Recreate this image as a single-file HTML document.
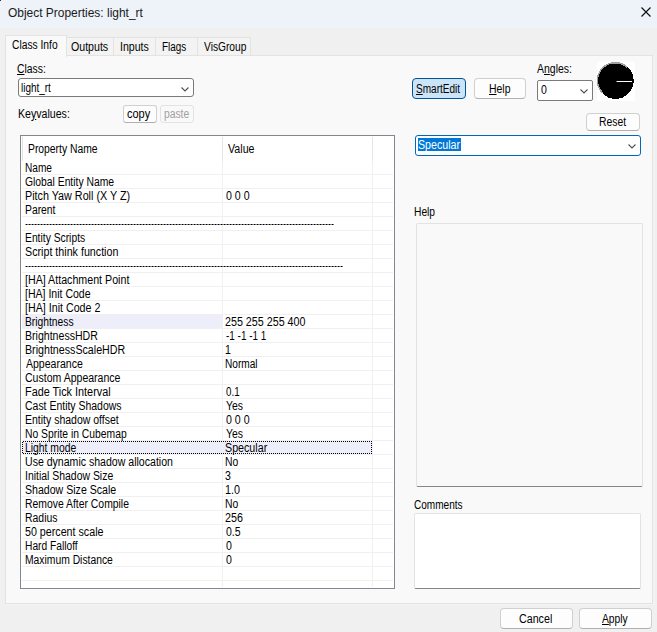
<!DOCTYPE html>
<html><head><meta charset="utf-8">
<style>
*{box-sizing:border-box;margin:0;padding:0}
html,body{width:657px;height:632px;overflow:hidden;background:#f0f0f0}
body{position:relative;font-family:"Liberation Sans",sans-serif;font-size:12px;color:#000}
.a{position:absolute}
.t{position:absolute;white-space:nowrap;line-height:normal;transform-origin:0 0}
u{text-decoration:underline;text-underline-offset:1px}
.btn{position:absolute;background:#fdfdfd;border:1px solid #d0d0d0;border-bottom-color:#b0b0b0;border-radius:4px}
.combo{position:absolute;background:#fff;border:1px solid #7a7a7a;border-radius:3px}
.chev{position:absolute}
</style></head><body>

<div class="a" style="left:0;top:0;width:657px;height:28px;background:#edf3f8"></div>
<div class="a" style="left:0;top:0;width:1px;height:1px;background:#333"></div>
<div class="t" style="left:7.95px;top:6px;transform:scaleX(0.996);color:#1a1a1a">Object Properties: light_rt</div>
<svg class="a" style="left:640px;top:6px" width="13" height="13" viewBox="0 0 13 13"><path d="M1.5 1.5L10.5 10.5M10.5 1.5L1.5 10.5" stroke="#111" stroke-width="1.15"/></svg>
<div class="a" style="left:66px;top:37px;width:48px;height:19px;background:#f3f3f3;border:1px solid #e3e3e3"></div>
<div class="a" style="left:113px;top:37px;width:43px;height:19px;background:#f3f3f3;border:1px solid #e3e3e3"></div>
<div class="a" style="left:155px;top:37px;width:43px;height:19px;background:#f3f3f3;border:1px solid #e3e3e3"></div>
<div class="a" style="left:197px;top:37px;width:54px;height:19px;background:#f3f3f3;border:1px solid #e3e3e3"></div>
<div class="a" style="left:5px;top:55px;width:648px;height:549px;background:#f9f9f9;border:1px solid #e3e3e3"></div>
<div class="a" style="left:653px;top:56px;width:2px;height:549px;background:#f3f3f3"></div>
<div class="a" style="left:6px;top:604px;width:649px;height:1px;background:#f3f3f3"></div>
<div class="a" style="left:5px;top:35px;width:62px;height:22px;background:#f9f9f9;border:1px solid #e3e3e3;border-bottom:none"></div>
<div class="t" style="left:12.33px;top:38px;transform:scaleX(0.855)">Class Info</div>
<div class="t" style="left:70.64px;top:40px;transform:scaleX(0.884)">Outputs</div>
<div class="t" style="left:119.51px;top:40px;transform:scaleX(0.882)">Inputs</div>
<div class="t" style="left:162.20px;top:40px;transform:scaleX(0.823)">Flags</div>
<div class="t" style="left:203.54px;top:40px;transform:scaleX(0.851)">VisGroup</div>
<div class="t" style="left:17.41px;top:62px;transform:scaleX(0.863)"><u>C</u>lass:</div>
<div class="combo" style="left:18px;top:78px;width:176px;height:19px"></div>
<div class="t" style="left:20.73px;top:81px;transform:scaleX(0.828)">light_rt</div>
<svg class="chev" style="left:180px;top:86px" width="10" height="7" viewBox="0 0 10 7"><path d="M1.5 1.5L5 5L8.5 1.5" fill="none" stroke="#505050" stroke-width="1.1"/></svg>
<div class="t" style="left:18.18px;top:107px;transform:scaleX(0.883)">Ke<u>y</u>values:</div>
<div class="btn" style="left:123px;top:105px;width:34px;height:18px;border-radius:3px"></div>
<div class="t" style="left:127.42px;top:107px;transform:scaleX(0.915)">copy</div>
<div class="btn" style="left:160px;top:105px;width:34px;height:18px;border-radius:3px;background:#f9f9f9;border-color:#e3e3e3"></div>
<div class="t" style="left:163.50px;top:107px;transform:scaleX(0.859);color:#a0a0a0">paste</div>
<div class="a" style="left:20px;top:135px;width:375px;height:454px;background:#fff;border:1px solid #828790"></div>
<div class="a" style="left:22px;top:137px;width:1px;height:24px;background:#e5e5e5"></div>
<div class="a" style="left:222px;top:137px;width:1px;height:24px;background:#e5e5e5"></div>
<div class="a" style="left:372px;top:137px;width:1px;height:24px;background:#e5e5e5"></div>
<div class="t" style="left:27.50px;top:142px;transform:scaleX(0.862)">Property Name</div>
<div class="t" style="left:227.61px;top:142px;transform:scaleX(0.889)">Value</div>
<div class="a" style="left:222px;top:161px;width:1px;height:426px;background:#f0f0f0"></div>
<div class="a" style="left:372px;top:161px;width:1px;height:426px;background:#f0f0f0"></div>
<div class="a" style="left:22px;top:315px;width:200px;height:13px;background:#eeeefb"></div>
<div class="a" style="left:22px;top:441px;width:350px;height:13px;background:#eeeefb"></div>
<div class="a" style="left:22px;top:174px;width:371px;height:1px;background:#f0f0f0"></div>
<div class="a" style="left:22px;top:188px;width:371px;height:1px;background:#f0f0f0"></div>
<div class="a" style="left:22px;top:202px;width:371px;height:1px;background:#f0f0f0"></div>
<div class="a" style="left:22px;top:216px;width:371px;height:1px;background:#f0f0f0"></div>
<div class="a" style="left:22px;top:230px;width:371px;height:1px;background:#f0f0f0"></div>
<div class="a" style="left:22px;top:244px;width:371px;height:1px;background:#f0f0f0"></div>
<div class="a" style="left:22px;top:258px;width:371px;height:1px;background:#f0f0f0"></div>
<div class="a" style="left:22px;top:272px;width:371px;height:1px;background:#f0f0f0"></div>
<div class="a" style="left:22px;top:286px;width:371px;height:1px;background:#f0f0f0"></div>
<div class="a" style="left:22px;top:300px;width:371px;height:1px;background:#f0f0f0"></div>
<div class="a" style="left:22px;top:314px;width:371px;height:1px;background:#f0f0f0"></div>
<div class="a" style="left:22px;top:328px;width:371px;height:1px;background:#f0f0f0"></div>
<div class="a" style="left:22px;top:342px;width:371px;height:1px;background:#f0f0f0"></div>
<div class="a" style="left:22px;top:356px;width:371px;height:1px;background:#f0f0f0"></div>
<div class="a" style="left:22px;top:370px;width:371px;height:1px;background:#f0f0f0"></div>
<div class="a" style="left:22px;top:384px;width:371px;height:1px;background:#f0f0f0"></div>
<div class="a" style="left:22px;top:398px;width:371px;height:1px;background:#f0f0f0"></div>
<div class="a" style="left:22px;top:412px;width:371px;height:1px;background:#f0f0f0"></div>
<div class="a" style="left:22px;top:426px;width:371px;height:1px;background:#f0f0f0"></div>
<div class="a" style="left:22px;top:440px;width:371px;height:1px;background:#f0f0f0"></div>
<div class="a" style="left:22px;top:454px;width:371px;height:1px;background:#f0f0f0"></div>
<div class="a" style="left:22px;top:468px;width:371px;height:1px;background:#f0f0f0"></div>
<div class="a" style="left:22px;top:482px;width:371px;height:1px;background:#f0f0f0"></div>
<div class="a" style="left:22px;top:496px;width:371px;height:1px;background:#f0f0f0"></div>
<div class="a" style="left:22px;top:510px;width:371px;height:1px;background:#f0f0f0"></div>
<div class="a" style="left:22px;top:524px;width:371px;height:1px;background:#f0f0f0"></div>
<div class="a" style="left:22px;top:538px;width:371px;height:1px;background:#f0f0f0"></div>
<div class="a" style="left:22px;top:552px;width:371px;height:1px;background:#f0f0f0"></div>
<div class="a" style="left:22px;top:566px;width:371px;height:1px;background:#f0f0f0"></div>
<div class="a" style="left:22px;top:580px;width:371px;height:1px;background:#f0f0f0"></div>
<div class="a" style="left:23px;top:441px;width:349px;height:1px;background:repeating-linear-gradient(90deg,#000 0 1px,transparent 1px 2px)"></div>
<div class="a" style="left:23px;top:453px;width:349px;height:1px;background:repeating-linear-gradient(90deg,#000 0 1px,transparent 1px 2px)"></div>
<div class="a" style="left:22px;top:442px;width:1px;height:11px;background:repeating-linear-gradient(180deg,#000 0 1px,transparent 1px 2px)"></div>
<div class="a" style="left:371px;top:443px;width:1px;height:9px;background:repeating-linear-gradient(180deg,#000 0 1px,transparent 1px 2px)"></div>
<div class="t" style="left:24.76px;top:161px;transform:scaleX(0.842)">Name</div>
<div class="t" style="left:24.74px;top:175px;transform:scaleX(0.861)">Global Entity Name</div>
<div class="t" style="left:24.70px;top:189px;transform:scaleX(0.897)">Pitch Yaw Roll (X Y Z)</div>
<div class="t" style="left:225.60px;top:189px;transform:scaleX(0.885)">0 0 0</div>
<div class="t" style="left:24.74px;top:203px;transform:scaleX(0.862)">Parent</div>
<div class="a" style="left:25px;top:224px;width:309px;height:1px;background:repeating-linear-gradient(90deg,#c8781e 0 1px,#000 1px 2px,#2a80d8 2px 3px)"></div>
<div class="t" style="left:24.74px;top:231px;transform:scaleX(0.859)">Entity Scripts</div>
<div class="t" style="left:24.71px;top:245px;transform:scaleX(0.892)">Script think function</div>
<div class="a" style="left:25px;top:266px;width:318px;height:1px;background:repeating-linear-gradient(90deg,#c8781e 0 1px,#000 1px 2px,#2a80d8 2px 3px)"></div>
<div class="t" style="left:24.71px;top:273px;transform:scaleX(0.889)">[HA] Attachment Point</div>
<div class="t" style="left:24.72px;top:287px;transform:scaleX(0.878)">[HA] Init Code</div>
<div class="t" style="left:24.71px;top:301px;transform:scaleX(0.890)">[HA] Init Code 2</div>
<div class="t" style="left:24.74px;top:315px;transform:scaleX(0.856)">Brightness</div>
<div class="t" style="left:224.71px;top:315px;transform:scaleX(0.893)">255 255 255 400</div>
<div class="t" style="left:24.72px;top:329px;transform:scaleX(0.881)">BrightnessHDR</div>
<div class="t" style="left:225.60px;top:329px;transform:scaleX(0.827)">-1 -1 -1 1</div>
<div class="t" style="left:24.71px;top:343px;transform:scaleX(0.889)">BrightnessScaleHDR</div>
<div class="t" style="left:224.72px;top:343px;transform:scaleX(0.880)">1</div>
<div class="t" style="left:25.60px;top:357px;transform:scaleX(0.877)">Appearance</div>
<div class="t" style="left:224.76px;top:357px;transform:scaleX(0.843)">Normal</div>
<div class="t" style="left:24.72px;top:371px;transform:scaleX(0.878)">Custom Appearance</div>
<div class="t" style="left:24.70px;top:385px;transform:scaleX(0.904)">Fade Tick Interval</div>
<div class="t" style="left:225.60px;top:385px;transform:scaleX(0.812)">0.1</div>
<div class="t" style="left:24.73px;top:399px;transform:scaleX(0.872)">Cast Entity Shadows</div>
<div class="t" style="left:225.60px;top:399px;transform:scaleX(0.868)">Yes</div>
<div class="t" style="left:24.73px;top:413px;transform:scaleX(0.874)">Entity shadow offset</div>
<div class="t" style="left:225.60px;top:413px;transform:scaleX(0.885)">0 0 0</div>
<div class="t" style="left:24.74px;top:427px;transform:scaleX(0.861)">No Sprite in Cubemap</div>
<div class="t" style="left:225.60px;top:427px;transform:scaleX(0.868)">Yes</div>
<div class="t" style="left:24.74px;top:441px;transform:scaleX(0.862)">Light mode</div>
<div class="t" style="left:224.71px;top:441px;transform:scaleX(0.891)">Specular</div>
<div class="t" style="left:24.72px;top:455px;transform:scaleX(0.880)">Use dynamic shadow allocation</div>
<div class="t" style="left:224.74px;top:455px;transform:scaleX(0.864)">No</div>
<div class="t" style="left:24.73px;top:469px;transform:scaleX(0.870)">Initial Shadow Size</div>
<div class="t" style="left:224.72px;top:469px;transform:scaleX(0.880)">3</div>
<div class="t" style="left:24.72px;top:483px;transform:scaleX(0.882)">Shadow Size Scale</div>
<div class="t" style="left:224.70px;top:483px;transform:scaleX(0.900)">1.0</div>
<div class="t" style="left:24.73px;top:497px;transform:scaleX(0.866)">Remove After Compile</div>
<div class="t" style="left:224.74px;top:497px;transform:scaleX(0.864)">No</div>
<div class="t" style="left:24.73px;top:511px;transform:scaleX(0.869)">Radius</div>
<div class="t" style="left:224.71px;top:511px;transform:scaleX(0.895)">256</div>
<div class="t" style="left:24.71px;top:525px;transform:scaleX(0.891)">50 percent scale</div>
<div class="t" style="left:225.60px;top:525px;transform:scaleX(0.875)">0.5</div>
<div class="t" style="left:24.75px;top:539px;transform:scaleX(0.852)">Hard Falloff</div>
<div class="t" style="left:225.60px;top:539px;transform:scaleX(0.880)">0</div>
<div class="t" style="left:24.74px;top:553px;transform:scaleX(0.861)">Maximum Distance</div>
<div class="t" style="left:225.60px;top:553px;transform:scaleX(0.880)">0</div>
<div class="a" style="left:412px;top:78px;width:54px;height:21px;background:#cce4f7;border:1px solid #005499;border-radius:4px"></div>
<div class="t" style="left:415.77px;top:82px;transform:scaleX(0.836)"><u>S</u>martEdit</div>
<div class="btn" style="left:474px;top:78px;width:52px;height:21px"></div>
<div class="t" style="left:488.73px;top:82px;transform:scaleX(0.870)"><u>H</u>elp</div>
<div class="t" style="left:536.55px;top:62px;transform:scaleX(0.874)">A<u>n</u>gles:</div>
<div class="combo" style="left:537px;top:80px;width:56px;height:21px;border-radius:2px"></div>
<div class="t" style="left:540.50px;top:83px;transform:scaleX(0.880)">0</div>
<svg class="chev" style="left:579px;top:88px" width="10" height="7" viewBox="0 0 10 7"><path d="M1.5 1.5L5 5L8.5 1.5" fill="none" stroke="#505050" stroke-width="1.1"/></svg>
<div class="a" style="left:597px;top:62px;width:38px;height:39px;background:#fff"></div>
<svg class="a" style="left:597px;top:62px" width="38" height="39" viewBox="0 0 38 39">
<circle cx="18.5" cy="18.75" r="18.2" fill="#000" shape-rendering="crispEdges"/>
<path d="M5.5 30.85 A17.75 17.75 0 0 1 30.4 5.56" fill="none" stroke="#a0a0a0" stroke-width="1.5" shape-rendering="crispEdges"/>
<path d="M19.5 19.5H35" stroke="#fff" stroke-width="1"/>
</svg>
<div class="btn" style="left:586px;top:113px;width:54px;height:18px"></div>
<div class="t" style="left:598.55px;top:115px;transform:scaleX(0.864)">Reset</div>
<div class="combo" style="left:415px;top:135px;width:226px;height:21px;border-color:#0067c0"></div>
<div class="a" style="left:418px;top:138px;width:43px;height:13px;background:#0078d7"></div>
<div class="t" style="left:417.86px;top:138px;transform:scaleX(0.886);color:#fff">Specular</div>
<svg class="chev" style="left:627px;top:143px" width="10" height="7" viewBox="0 0 10 7"><path d="M1.5 1.5L5 5L8.5 1.5" fill="none" stroke="#505050" stroke-width="1.1"/></svg>
<div class="t" style="left:413.71px;top:205px;transform:scaleX(0.853)">Help</div>
<div class="a" style="left:416px;top:223px;width:227px;height:264px;background:#f9f9f9;border:1px solid #e3e3e3;border-bottom:1px solid #868686;border-radius:2px"></div>
<div class="t" style="left:413.74px;top:498px;transform:scaleX(0.838)">Comments</div>
<div class="a" style="left:414px;top:513px;width:227px;height:76px;background:#fff;border:1px solid #e3e3e3;border-bottom:1px solid #868686;border-radius:2px"></div>
<div class="btn" style="left:500px;top:608px;width:73px;height:21px"></div>
<div class="t" style="left:519.48px;top:612px;transform:scaleX(0.891)">Cancel</div>
<div class="btn" style="left:579px;top:608px;width:73px;height:21px"></div>
<div class="t" style="left:601.55px;top:612px;transform:scaleX(0.857)"><u>A</u>pply</div>
</body></html>
